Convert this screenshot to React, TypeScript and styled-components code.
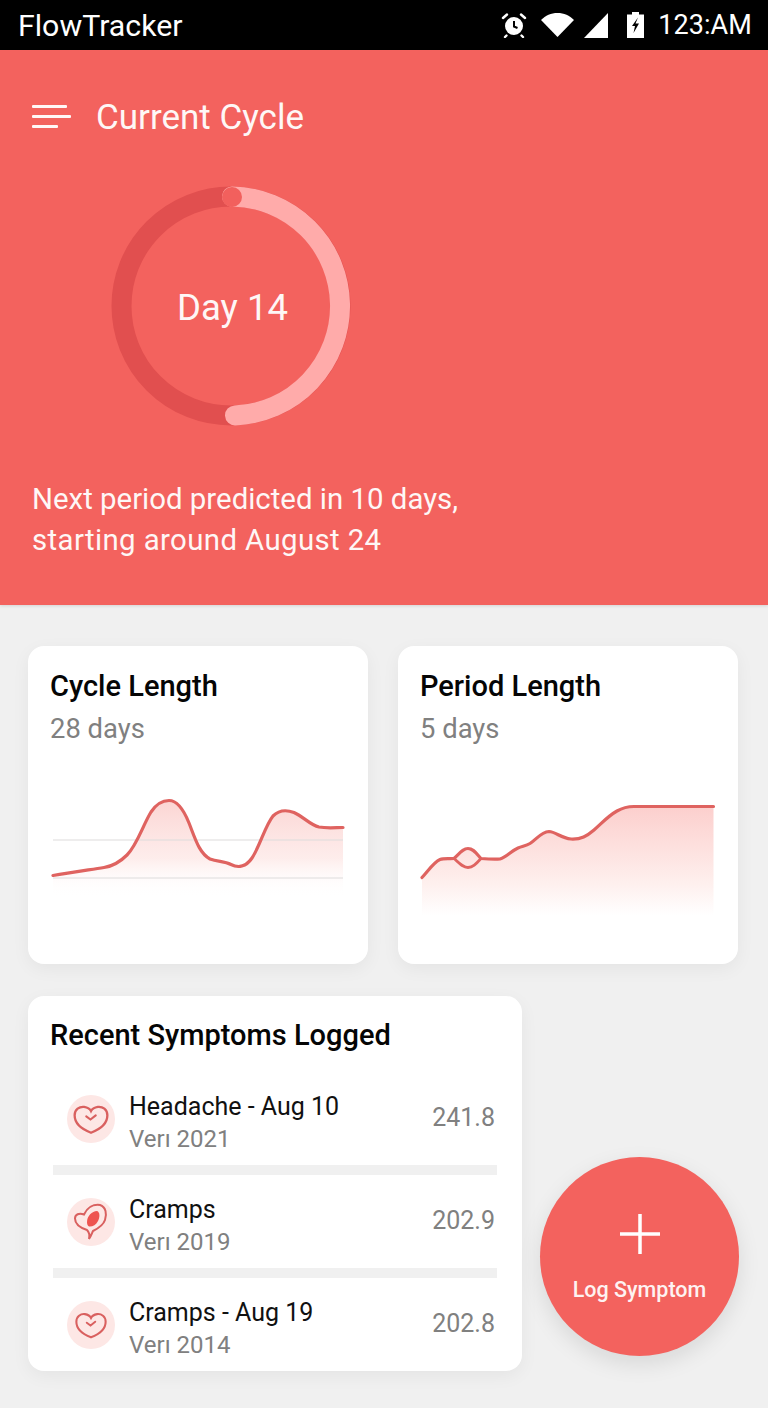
import styled, { createGlobalStyle } from "styled-components";

const Colors = {
  coral: "#f3625e",
  ringDark: "#e14f4f",
  ringLight: "#ffabaa",
  line: "#df6360",
  page: "#f0f0f0",
  grey: "#808080",
};

const GlobalStyle = createGlobalStyle`
  html, body {
    margin: 0;
    padding: 0;
    background: ${Colors.page};
    font-family: Roboto, "Liberation Sans", sans-serif;
  }
`;

const Screen = styled.div`
  position: relative;
  width: 768px;
  height: 1408px;
  overflow: hidden;
  background: ${Colors.page};
`;

const StatusBar = styled.div`
  height: 50px;
  background: #000;
  color: #fff;
  display: flex;
  align-items: center;
  padding: 0 16px 0 18px;
`;

const AppName = styled.div`
  font-size: 30.300px;
  flex: 1;
`;

const StatusIcons = styled.div`
  display: flex;
  align-items: center;
`;

const StatusIcon = styled.svg<{ $gap: number }>`
  display: block;
  margin-right: ${(p) => p.$gap}px;
`;

const StatusTime = styled.span`
  font-size: 27px;
  letter-spacing: 0.1px;
`;

const Header = styled.header`
  height: 555px;
  box-sizing: border-box;
  background: ${Colors.coral};
  color: #fff;
  padding: 47px 32px 0;
  box-shadow: 0 1px 3px rgba(0, 0, 0, 0.12);
`;

const TopRow = styled.div`
  display: flex;
  align-items: center;
  gap: 25px;
  height: 40px;
`;

const Burger = styled.div`
  display: flex;
  flex-direction: column;
  align-items: flex-start;
  gap: 7px;
  margin-top: -1px;
`;

const BurgerBar = styled.span<{ $w: number }>`
  display: block;
  width: ${(p) => p.$w}px;
  height: 3px;
  border-radius: 1px;
  background: #fff;
  opacity: 0.95;
`;

const ScreenTitle = styled.h1`
  margin: 0;
  font-size: 35px;
  font-weight: 400;
  color: #fff;
  opacity: 0.95;
`;

const RingWrap = styled.div`
  position: relative;
  width: 240px;
  height: 240px;
  margin: 49px 0 0 79px;
`;

const RingLabel = styled.div`
  position: absolute;
  inset: 0;
  display: flex;
  align-items: center;
  justify-content: center;
  font-size: 36.500px;
  color: #fff;
  opacity: 0.95;
  padding: 2px 0 0 3px;
  box-sizing: border-box;
`;

const Prediction = styled.p`
  margin: 53px 0 0;
  font-size: 29.400px;
  line-height: 41px;
  color: #fff;
  opacity: 0.95;
`;

const PredictionDate = styled.span`
  letter-spacing: 0.38px;
`;

const Content = styled.main`
  display: grid;
  grid-template-columns: 340px 340px;
  column-gap: 30px;
  row-gap: 32px;
  padding: 41px 0 0 28px;
`;

const Card = styled.section`
  background: #fff;
  border-radius: 16px;
  box-shadow: 0 5px 18px rgba(0, 0, 0, 0.05);
`;

const StatCard = styled(Card)`
  height: 318px;
  box-sizing: border-box;
  padding: 20px 22px 0 22px;
`;

const CardTitle = styled.h2`
  margin: 0;
  font-size: 29px;
  line-height: 40px;
  font-weight: 500;
  color: #050505;
`;

const CardValue = styled.div`
  font-size: 27.400px;
  line-height: 46px;
  color: ${Colors.grey};
`;

const ChartSvg = styled.svg`
  display: block;
  margin: 13px 0 0 -0.500px;
  overflow: visible;
`;

const SymptomsCard = styled(Card)`
  grid-column: 1 / -1;
  width: 494px;
  height: 375px;
  box-sizing: border-box;
  padding: 19px 25px 0 22px;
`;

const SymptomList = styled.div`
  margin: 17px 0 0 3px;
`;

const SymptomRow = styled.div`
  height: 93px;
  display: flex;
  align-items: center;
  padding: 0 2px 0 14px;
  gap: 14px;
`;

const Divider = styled.div`
  height: 10px;
  background: ${Colors.page};
`;

const IconCircle = styled.div`
  width: 48px;
  height: 48px;
  flex: none;
  border-radius: 50%;
  background: #fde7e5;
  display: flex;
  align-items: center;
  justify-content: center;
`;

const SymptomText = styled.div`
  flex: 1;
  margin-top: 8px;
`;

const SymptomName = styled.div`
  font-size: 25px;
  line-height: 32px;
  color: #111;
`;

const SymptomMeta = styled.div`
  font-size: 24px;
  line-height: 32px;
  color: ${Colors.grey};
`;

const SymptomValue = styled.div`
  font-size: 25px;
  margin-bottom: 2px;
  color: ${Colors.grey};
`;

const Fab = styled.button`
  position: absolute;
  left: 540px;
  top: 1157px;
  width: 199px;
  height: 199px;
  border: 0;
  border-radius: 50%;
  padding: 0;
  background: ${Colors.coral};
  color: #fff;
  font-family: inherit;
  box-shadow: 0 8px 22px rgba(0, 0, 0, 0.1);
  display: flex;
  flex-direction: column;
  align-items: center;
`;

const FabPlus = styled.svg`
  margin-top: 57px;
`;

const FabLabel = styled.span`
  margin-top: 23px;
  font-size: 21.500px;
  font-weight: 500;
  opacity: 0.92;
`;

const Alarm = () => (
  <StatusIcon $gap={14} width="26" height="26" viewBox="0 0 26 26">
    <circle cx="13" cy="14" r="9" fill="#fff" />
    <path d="M13 9v5.500l3.500 1.500" fill="none" stroke="#000" strokeWidth="2" />
    <path d="M2 6 6 2.500M24 6 20 2.500M5.500 23.500 4 25M20.500 23.500 22 25" stroke="#fff" strokeWidth="2.400" strokeLinecap="round" />
  </StatusIcon>
);

const Wifi = () => (
  <StatusIcon $gap={10} width="33" height="24" viewBox="0 0 33 24">
    <path d="M0 7C4.500 2.500 10 0 16.500 0S28.500 2.500 33 7L16.500 24Z" fill="#fff" />
  </StatusIcon>
);

const Signal = () => (
  <StatusIcon $gap={19} width="24" height="25" viewBox="0 0 24 25">
    <path d="M24 0V25H0Z" fill="#fff" />
  </StatusIcon>
);

const Battery = () => (
  <StatusIcon $gap={14} width="17" height="26" viewBox="0 0 17 26">
    <path d="M5 0h7v2.500h5V26H0V2.500h5Z" fill="#fff" />
    <path d="M11 5.500 5 14h3l-1.500 7 5.500-9.500H8.500L11 5.500Z" fill="#000" />
  </StatusIcon>
);

const ProgressRing = () => (
  <svg width="240" height="240" viewBox="0 0 240 240">
    <circle cx="120" cy="120" r="109.500" fill="none" stroke={Colors.ringDark} strokeWidth="20" />
    <path d="M121 10.500A109.500 109.500 0 0 1 124 229.400" fill="none" stroke={Colors.ringLight} strokeWidth="20" strokeLinecap="round" />
    <circle cx="121" cy="11" r="10" fill="#f2605d" />
  </svg>
);

const cyclePath =
  "M53 875.500C70 872.500 88 870 104 867.500C114 866 120 862 127 855C137 845 143 825 151 812C157 803 163 800.500 169 800.500C177 800.500 183 808 189 823C195 838 199 853 210 859C218 862 224 861 231 864.500C238 868 246 867 252 858C260 846 265 826 273 816C279 810 286 809.500 294 812.500C304 817 310 825 319 827C327 828.500 336 827.500 343 827.500";

const periodPath =
  "M422 877.500C428 871 434 862 440 859.500C444 858 450 859 454 858.500C460 853 463 848.500 468 848.500C473 848.500 476 853 481 858.500C487 859 494 859.500 500 859C507 857 511 851 518 848C523 846 526 846 530 843.500C537 839 541 832 549 831.500C556 832 561 838 571 839C581 839.500 587 836 594 830C602 823 608 816 617 811C623 807.500 628 806.500 634 806.500H713.500";

const CycleChart = () => (
  <ChartSvg width="296" height="150" viewBox="50 765 296 150">
    <defs>
      <linearGradient id="cycleFill" x1="0" y1="0" x2="0" y2="1">
        <stop offset="0" stopColor="#fbd0ce" stopOpacity="0.9" />
        <stop offset="0.6" stopColor="#fde5e3" stopOpacity="0.7" />
        <stop offset="1" stopColor="#fff" stopOpacity="0" />
      </linearGradient>
    </defs>
    <path d={`${cyclePath}V897H53Z`} fill="url(#cycleFill)" />
    <path d="M53 840H343M53 878H343" stroke="#dedcdc" strokeWidth="1.200" />
    <path d={cyclePath} fill="none" stroke={Colors.line} strokeWidth="3.200" strokeLinecap="round" />
  </ChartSvg>
);

const PeriodChart = () => (
  <ChartSvg width="296" height="150" viewBox="420 765 296 150">
    <defs>
      <linearGradient id="periodFill" x1="0" y1="0" x2="0" y2="1">
        <stop offset="0" stopColor="#fccfcd" />
        <stop offset="0.72" stopColor="#fef0ee" />
        <stop offset="1" stopColor="#fff" />
      </linearGradient>
    </defs>
    <path d={`${periodPath}V915H422Z`} fill="url(#periodFill)" />
    <path d={periodPath} fill="none" stroke={Colors.line} strokeWidth="3.200" strokeLinecap="round" />
    <path d="M454 858.500C460 864 463 867.500 468 867.500C473 867.500 476 864 481 858.500" fill="none" stroke={Colors.line} strokeWidth="2.800" />
  </ChartSvg>
);

const HeartCheck = ({ size }: { size: number }) => (
  <svg width={size} height={size} viewBox="0 0 36 36">
    <path
      d="M18 31C10 28 2.500 23 2.500 14.500C2.500 9 7 6 11.500 6.500C14.500 7 17 8.500 18 10.500C19 8.500 21.500 7 24.500 6.500C29 6 33.500 9 33.500 14.500C33.500 23 26 28 18 31Z"
      fill="none"
      stroke="#d9605f"
      strokeWidth="2.200"
    />
    <path d="M13.500 15.500 17.500 18.500 22.500 14.500" fill="none" stroke="#d9605f" strokeWidth="2" strokeLinecap="round" />
  </svg>
);

const HeartDrop = () => (
  <svg width="36" height="40" viewBox="0 0 36 40">
    <path
      d="M16 37C17 33 16 30 14 28C8 26 2 22 2 16.500C2 12.500 6 10.500 11 12.500C14 6 20 2 27 3C33 5 34 12 32 18C30 24 24 27 20 29C19 31 18 34 16 37Z"
      fill="none"
      stroke="#d9605f"
      strokeWidth="2"
    />
    <path d="M14 20C14 14 19 9 24 9C27 10 27 15 25 19C23 23 19 25 16 24.500C14.500 24 14 22 14 20Z" fill="#ee5450" />
  </svg>
);

const symptoms = [
  { name: "Headache - Aug 10", meta: "Verı 2021", value: "241.8", icon: <HeartCheck size={38} /> },
  { name: "Cramps", meta: "Verı 2019", value: "202.9", icon: <HeartDrop /> },
  { name: "Cramps - Aug 19", meta: "Verı 2014", value: "202.8", icon: <HeartCheck size={34} /> },
];

export default function App() {
  return (
    <Screen>
      <GlobalStyle />
      <StatusBar>
        <AppName>FlowTracker</AppName>
        <StatusIcons>
          <Alarm />
          <Wifi />
          <Signal />
          <Battery />
          <StatusTime>123:AM</StatusTime>
        </StatusIcons>
      </StatusBar>

      <Header>
        <TopRow>
          <Burger>
            <BurgerBar $w={35} />
            <BurgerBar $w={39} />
            <BurgerBar $w={26} />
          </Burger>
          <ScreenTitle>Current Cycle</ScreenTitle>
        </TopRow>
        <RingWrap>
          <ProgressRing />
          <RingLabel>Day 14</RingLabel>
        </RingWrap>
        <Prediction>
          Next period predicted in 10 days,
          <br />
          <PredictionDate>starting around August 24</PredictionDate>
        </Prediction>
      </Header>

      <Content>
        <StatCard>
          <CardTitle>Cycle Length</CardTitle>
          <CardValue>28 days</CardValue>
          <CycleChart />
        </StatCard>
        <StatCard>
          <CardTitle>Period Length</CardTitle>
          <CardValue>5 days</CardValue>
          <PeriodChart />
        </StatCard>
        <SymptomsCard>
          <CardTitle>Recent Symptoms Logged</CardTitle>
          <SymptomList>
            {symptoms.map((s, i) => (
              <div key={s.meta}>
                {i > 0 && <Divider />}
                <SymptomRow>
                  <IconCircle>{s.icon}</IconCircle>
                  <SymptomText>
                    <SymptomName>{s.name}</SymptomName>
                    <SymptomMeta>{s.meta}</SymptomMeta>
                  </SymptomText>
                  <SymptomValue>{s.value}</SymptomValue>
                </SymptomRow>
              </div>
            ))}
          </SymptomList>
        </SymptomsCard>
      </Content>

      <Fab>
        <FabPlus width="40" height="40" viewBox="0 0 40 40">
          <path d="M20 0V40M0 20H40" stroke="#fff" strokeWidth="3.500" />
        </FabPlus>
        <FabLabel>Log Symptom</FabLabel>
      </Fab>
    </Screen>
  );
}
